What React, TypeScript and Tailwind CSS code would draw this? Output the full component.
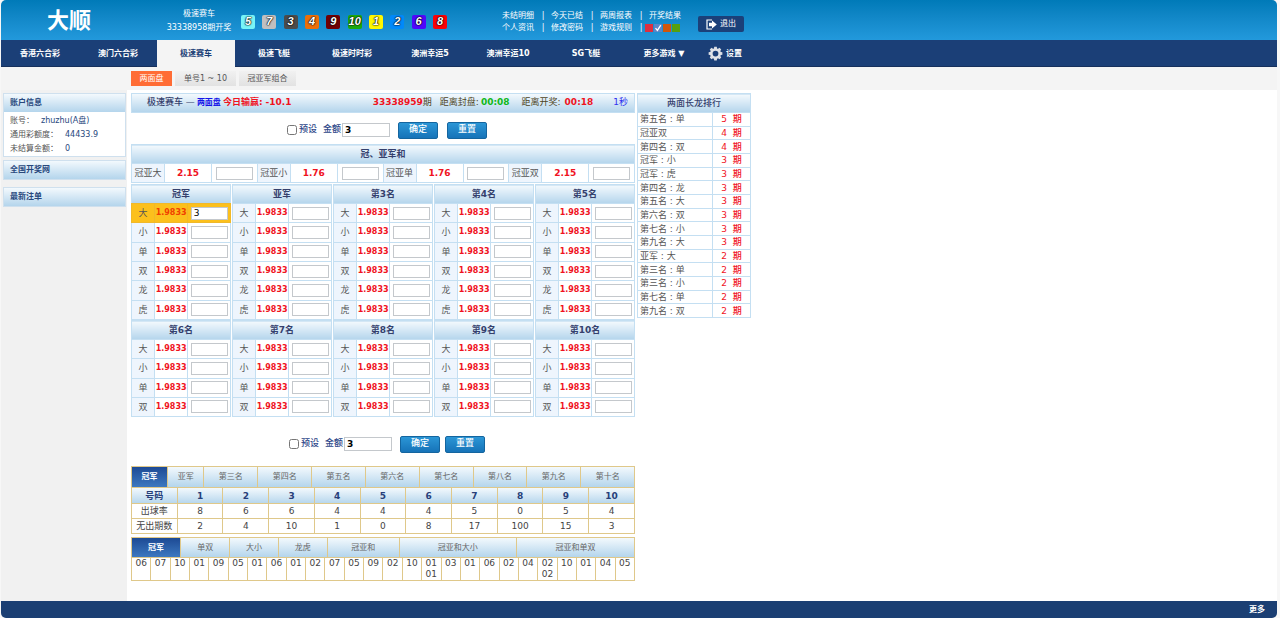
import React, { useState } from 'react';

const FONT = "font-['DejaVu_Sans','Noto_Sans_CJK_SC',sans-serif]";
const HEAD = 'bg-linear-to-b from-[#f3f9fd] to-[#b4d5ec]';

const balls = [
    { n: 5, color: 'bg-[#78f5f8]' },
    { n: 7, color: 'bg-[#c1bfbf]' },
    { n: 3, color: 'bg-[#4b4b4b]' },
    { n: 4, color: 'bg-[#ec6f0a]' },
    { n: 9, color: 'bg-[#700005]' },
    { n: 10, color: 'bg-[#1ba90d]' },
    { n: 1, color: 'bg-[#fff700]' },
    { n: 2, color: 'bg-[#0089fa]' },
    { n: 6, color: 'bg-[#4f08fb]' },
    { n: 8, color: 'bg-[#fb0207]' },
];

const menu = [
    ['未结明细', '今天已结', '两周报表', '开奖结果'],
    ['个人资讯', '修改密码', '游戏规则'],
];

const games = [
    '香港六合彩',
    '澳门六合彩',
    '极速赛车',
    '极速飞艇',
    '极速时时彩',
    '澳洲幸运5',
    '澳洲幸运10',
    'SG飞艇',
    '更多游戏 ▼',
];

const sums = [
    { name: '冠亚大', odds: '2.15' },
    { name: '冠亚小', odds: '1.76' },
    { name: '冠亚单', odds: '1.76' },
    { name: '冠亚双', odds: '2.15' },
];

const firstHalf = ['冠军', '亚军', '第3名', '第4名', '第5名'];
const secondHalf = ['第6名', '第7名', '第8名', '第9名', '第10名'];

const ranking: [string, number][] = [
    ['第五名 : 单', 5],
    ['冠亚双', 4],
    ['第四名 : 双', 4],
    ['冠军 : 小', 3],
    ['冠军 : 虎', 3],
    ['第四名 : 龙', 3],
    ['第五名 : 大', 3],
    ['第六名 : 双', 3],
    ['第七名 : 小', 3],
    ['第九名 : 大', 3],
    ['亚军 : 大', 2],
    ['第三名 : 单', 2],
    ['第三名 : 小', 2],
    ['第七名 : 单', 2],
    ['第九名 : 双', 2],
];

const positionTabs = ['冠军', '亚军', '第三名', '第四名', '第五名', '第六名', '第七名', '第八名', '第九名', '第十名'];

const stats = [
    { name: '出球率', values: [8, 6, 6, 4, 4, 4, 5, 0, 5, 4] },
    { name: '无出期数', values: [2, 4, 10, 1, 0, 8, 17, 100, 15, 3] },
];

const trendTabs = [
    { name: '冠军', width: 'grow-[49]' },
    { name: '单双', width: 'grow-[49]' },
    { name: '大小', width: 'grow-[48]' },
    { name: '龙虎', width: 'grow-[49]' },
    { name: '冠亚和', width: 'grow-[72]' },
    { name: '冠亚和大小', width: 'grow-[118]' },
    { name: '冠亚和单双', width: 'grow-[119]' },
];

const trend = [
    ['06'], ['07'], ['10'], ['01'], ['09'], ['05'], ['01'], ['06'], ['01'], ['02'], ['07'], ['05'], ['09'],
    ['02'], ['10'], ['01', '01'], ['03'], ['01'], ['06'], ['02'], ['04'], ['02', '02'], ['10'], ['01'], ['04'], ['05'],
];

const GearIcon = () => (
    <svg viewBox="0 0 24 24" className="size-[15px]" fill="none">
        {[0, 45, 90, 135, 180, 225, 270, 315].map((a) => (
            <path key={a} d="M9.2 5 10 1h4l.8 4z" fill="#d9dde3" transform={`rotate(${a} 12 12)`} />
        ))}
        <circle cx="12" cy="12" r="6.6" stroke="#dfe2e7" strokeWidth="4" />
    </svg>
);

const ExitIcon = () => (
    <svg viewBox="0 0 11 11" className="size-[11px]">
        <path d="M6 1H1v9h5" fill="none" stroke="#fff" strokeWidth="1.2" />
        <path d="M3 3.7h3V1.4l4.8 4.1L6 9.6V7.3H3z" fill="#fff" />
    </svg>
);

const Header = () => (
    <header className="flex h-10 items-center rounded-t-[5px] bg-linear-to-b from-[#007ab8] to-[#2299dc] pt-px text-[8px] text-white">
        <h1 className="w-[158px] pl-[46px] text-[22px] leading-none font-bold">大顺</h1>
        <div className="w-[80px] text-center leading-[14px]">
            <div>极速赛车</div>
            <div>33338958期开奖</div>
        </div>
        <ul className="ml-0.5 flex w-[206px] justify-between pt-0.5">
            {balls.map((b) => (
                <li
                    key={b.n}
                    className={`flex size-[14px] items-center justify-center rounded-[2px] font-['Liberation_Sans',sans-serif] text-[11px] font-bold italic text-white [text-shadow:0_0_1px_#000,0_0_1px_#000,0_0_2px_#000] ${b.color}`}
                >
                    {b.n}
                </li>
            ))}
        </ul>
        <div className="ml-[55px] pt-0.5 leading-3">
            {menu.map((row, i) => (
                <div key={i} className="flex items-center">
                    {row.map((item, j) => (
                        <React.Fragment key={item}>
                            {j > 0 && <span className="w-4 text-center">|</span>}
                            <a href="#" className="w-[33px]">
                                {item}
                            </a>
                        </React.Fragment>
                    ))}
                    {i === 1 && (
                        <>
                            <span className="w-4 text-center">|</span>
                            <span className="-ml-1 flex gap-px">
                                <button aria-label="红色" className="size-2 bg-[#dd2f40]" />
                                <button aria-label="蓝色" className="size-2 bg-[#5b86c8]">
                                    <svg viewBox="0 0 8 8" className="size-2">
                                        <path d="M1.5 4.2 3.4 6.4 6.8 1.2" fill="none" stroke="#fff" strokeWidth="1.3" />
                                    </svg>
                                </button>
                                <button aria-label="橙色" className="size-2 bg-[#d0560a]" />
                                <button aria-label="绿色" className="size-2 bg-[#55a010]" />
                            </span>
                        </>
                    )}
                </div>
            ))}
        </div>
        <button className="mt-[7px] ml-4 flex h-4 w-[46px] items-center justify-center gap-[3px] rounded-[2px] bg-[#1b4079]">
            <ExitIcon />
            退出
        </button>
    </header>
);

const GameNav = () => {
    const [active, setActive] = useState('极速赛车');

    return (
        <nav className="flex h-[27px] border-b border-[#16305c] bg-[#1b3f77] text-[8px] font-bold text-white">
            {games.map((g) => (
                <button
                    key={g}
                    onClick={() => setActive(g)}
                    className={`w-[78px] pt-px ${g === active ? '-mb-px bg-[#f4f4f4] text-[#1b3f77]' : ''}`}
                >
                    {g}
                </button>
            ))}
            <button className="ml-[5px] flex items-center gap-[3px] pt-px">
                <GearIcon />
                设置
            </button>
        </nav>
    );
};

const SubNav = () => (
    <div className="flex h-[23px] items-center gap-[3px] bg-[#f4f4f4] pl-[130px] text-[8px] text-[#555]">
        <button className="h-[15px] w-[41px] bg-[#ff6c35] text-white">两面盘</button>
        <button className="h-[15px] w-[61px] bg-linear-to-b from-[#f1f1f1] to-[#e2e2e2]">单号1 ~ 10</button>
        <button className="h-[15px] w-[57px] bg-linear-to-b from-[#f1f1f1] to-[#e2e2e2]">冠亚军组合</button>
    </div>
);

const Sidebar = () => (
    <aside className="w-[126px] shrink-0 bg-[#f1f1f1] pt-[3px] pr-px pl-0.5 text-[8px] text-[#555]">
        <section className="border border-[#cfe0ee] bg-white">
            <h2 className={`flex h-[18px] items-center pl-1.5 font-bold text-[#28487d] ${HEAD}`}>账户信息</h2>
            <dl className="flex flex-col pt-0.5 pl-1.5 leading-[14px] [&_dd]:text-[#28487d]">
                <div className="flex gap-[7px]">
                    <dt>账号：</dt>
                    <dd>zhuzhu(A盘)</dd>
                </div>
                <div className="flex gap-[7px]">
                    <dt>通用彩额度：</dt>
                    <dd>44433.9</dd>
                </div>
                <div className="flex gap-[7px]">
                    <dt>未结算金额：</dt>
                    <dd>0</dd>
                </div>
            </dl>
        </section>
        <h2 className={`mt-[3px] flex h-5 items-center border border-[#cfe0ee] pl-1.5 font-bold text-[#28487d] ${HEAD}`}>
            <a href="#">全国开奖网</a>
        </h2>
        <h2 className={`mt-[7px] flex h-5 items-center border border-[#cfe0ee] pl-1.5 font-bold text-[#28487d] ${HEAD}`}>
            最新注单
        </h2>
    </aside>
);

const BetInput = ({ label, value = '' }: { label: string; value?: string }) => (
    <input
        aria-label={label}
        defaultValue={value}
        className="mx-auto block h-[13px] w-[37px] border border-[#c4c8cc] bg-white px-0.5 text-[9px] text-black"
    />
);

const PresetBar = ({ id, className, gap }: { id: string; className: string; gap: string }) => (
    <div className={`flex items-center justify-center pl-2 text-[9px] font-medium text-[#2c4688] ${className}`}>
        <input id={`${id}-preset`} type="checkbox" className="size-[10px]" />
        <label htmlFor={`${id}-preset`} className="ml-0.5">
            预设
        </label>
        <label htmlFor={`${id}-amount`} className="ml-1.5">
            金额
        </label>
        <input
            id={`${id}-amount`}
            defaultValue="3"
            className="ml-px h-[14px] w-12 border border-[#c4c8cc] bg-white px-0.5 font-bold text-black"
        />
        <div className={`ml-2 flex text-white ${gap}`}>
            <button className="h-[17px] w-10 rounded-[2px] border border-[#14659f] bg-linear-to-b from-[#2b96d6] to-[#1673b8]">
                确定
            </button>
            <button className="h-[17px] w-10 rounded-[2px] border border-[#14659f] bg-linear-to-b from-[#2b96d6] to-[#1673b8]">
                重置
            </button>
        </div>
    </div>
);

const OddsTable = ({ title, rows, height }: { title: string; rows: string[]; height: string }) => (
    <table className={`w-full table-fixed border-collapse border border-[#c4dff2] text-center text-[9px] leading-3 ${height}`}>
        <colgroup>
            <col className="w-[23%]" />
            <col className="w-[34%]" />
            <col className="w-[43%]" />
        </colgroup>
        <thead>
            <tr>
                <th colSpan={3} className={`h-[19px] p-0 text-[#35406d] ${HEAD}`}>
                    {title}
                </th>
            </tr>
        </thead>
        <tbody>
            {rows.map((r) => {
                const picked = title === '冠军' && r === '大';
                return (
                    <tr key={r} className={picked ? 'bg-[#fcc01c]' : ''}>
                        <td className={`border p-0 text-[#555] ${picked ? 'border-[#f0b82a]' : 'border-[#c4dff2] bg-[#eef5fd]'}`}>
                            {r}
                        </td>
                        <td
                            className={`border p-0 text-[8px] font-bold ${picked ? 'border-[#f0b82a] text-[#f04000]' : 'border-[#c4dff2] text-[#f0131e]'}`}
                        >
                            1.9833
                        </td>
                        <td className={`border p-0 ${picked ? 'border-[#f0b82a]' : 'border-[#c4dff2]'}`}>
                            <BetInput label={`${title} ${r}`} value={picked ? '3' : ''} />
                        </td>
                    </tr>
                );
            })}
        </tbody>
    </table>
);

const Ranking = () => (
    <table className="h-[225px] w-[114px] shrink-0 border-collapse self-start border border-[#c4dff2] text-[9px] leading-3 text-[#555]">
        <thead>
            <tr>
                <th colSpan={2} className={`h-[19px] p-0 font-medium text-[#35406d] ${HEAD}`}>
                    两面长龙排行
                </th>
            </tr>
        </thead>
        <tbody>
            {ranking.map(([name, count]) => (
                <tr key={name}>
                    <td className="w-[75px] border border-[#c4dff2] p-0 pl-0.5">{name}</td>
                    <td className="border border-[#c4dff2] p-0 text-center font-medium text-[#f0131e]">
                        <span className="mr-1.5">{count}</span>期
                    </td>
                </tr>
            ))}
        </tbody>
    </table>
);

const tabStyle = (active: boolean) =>
    active ? 'bg-linear-to-b from-[#1d4a94] to-[#3d78c0] font-bold text-white' : `text-[#666] ${HEAD}`;

const Stats = () => {
    const [tab, setTab] = useState('冠军');

    return (
        <section className="text-[9px] text-[#444]">
            <div className="flex h-[21px] divide-x divide-[#dfc88a] border border-b-0 border-[#dfc88a] text-[8px]">
                {positionTabs.map((t) => (
                    <button
                        key={t}
                        onClick={() => setTab(t)}
                        className={`basis-0 ${t.length === 2 ? 'grow-2' : 'grow-3'} ${tabStyle(t === tab)}`}
                    >
                        {t}
                    </button>
                ))}
            </div>
            <table className="w-full table-fixed border-collapse text-center leading-3">
                <thead>
                    <tr className={`h-4 text-[#28407a] ${HEAD}`}>
                        <th className="border border-[#dfc88a] p-0">号码</th>
                        {[1, 2, 3, 4, 5, 6, 7, 8, 9, 10].map((n) => (
                            <th key={n} className="border border-[#dfc88a] p-0">
                                {n}
                            </th>
                        ))}
                    </tr>
                </thead>
                <tbody>
                    {stats.map((s) => (
                        <tr key={s.name} className="h-[15px]">
                            <td className="border border-[#dfc88a] p-0">{s.name}</td>
                            {s.values.map((v, i) => (
                                <td key={i} className="border border-[#dfc88a] p-0">
                                    {v}
                                </td>
                            ))}
                        </tr>
                    ))}
                </tbody>
            </table>
        </section>
    );
};

const Trend = () => {
    const [tab, setTab] = useState('冠军');

    return (
        <section className="mt-[3px] text-[9px] text-[#444]">
            <div className="flex h-5 divide-x divide-[#dfc88a] border border-b-0 border-[#dfc88a] text-[8px]">
                {trendTabs.map((t) => (
                    <button
                        key={t.name}
                        onClick={() => setTab(t.name)}
                        className={`basis-0 ${t.width} ${tabStyle(t.name === tab)}`}
                    >
                        {t.name}
                    </button>
                ))}
            </div>
            <table className="w-full table-fixed border-collapse text-center leading-[11px]">
                <tbody>
                    <tr>
                        {trend.map((nums, i) => (
                            <td key={i} className="border border-[#dfc88a] p-0 align-top">
                                {nums.map((n, j) => (
                                    <div key={j}>{n}</div>
                                ))}
                            </td>
                        ))}
                    </tr>
                </tbody>
            </table>
        </section>
    );
};

export default function App() {
    return (
        <div className={`flex min-h-screen flex-col bg-[#f7f7f7] pr-[3px] pl-px ${FONT}`}>
            <Header />
            <GameNav />
            <SubNav />
            <div className="flex flex-1 bg-white">
                <Sidebar />
                <main className="flex flex-1 gap-0.5 pt-[3px] pl-1">
                    <div className="w-full max-w-[504px]">
                        <div className={`flex h-5 items-center border border-[#c4dff2] pr-1.5 pl-[15px] text-[9px] whitespace-nowrap ${HEAD}`}>
                            <span className="font-medium text-[#35406d]">极速赛车 —</span>
                            <span className="ml-0.5 text-[8px] font-bold text-[#1414e8]">两面盘</span>
                            <span className="ml-0.5 font-bold text-[#f0131e]">今日输赢: -10.1</span>
                            <div className="ml-auto flex text-[#4f451d]">
                                <span>
                                    <b className="text-[#f0131e]">33338959</b>期
                                </span>
                                <span className="ml-2">距离封盘:</span>
                                <b className="ml-0.5 text-[#10b818]">00:08</b>
                                <span className="ml-3">距离开奖:</span>
                                <b className="ml-1 text-[#f0131e]">00:18</b>
                                <span className="ml-5 text-[#3232f0]">1秒</span>
                            </div>
                        </div>
                        <PresetBar id="top" className="h-[31px] pt-[3px]" gap="gap-[9px]" />
                        <table className="h-[39px] w-full table-fixed border-collapse border border-[#c4dff2] text-center text-[9px] leading-3">
                            <colgroup>
                                {sums.map((s) => (
                                    <React.Fragment key={s.name}>
                                        <col className="w-[33px]" />
                                        <col className="w-[47px]" />
                                        <col />
                                    </React.Fragment>
                                ))}
                            </colgroup>
                            <thead>
                                <tr>
                                    <th colSpan={12} className={`h-[19px] p-0 text-[#35406d] ${HEAD}`}>
                                        冠、亚军和
                                    </th>
                                </tr>
                            </thead>
                            <tbody>
                                <tr>
                                    {sums.map((s) => (
                                        <React.Fragment key={s.name}>
                                            <td className="border border-[#c4dff2] bg-[#eef5fd] p-0 text-[#555]">{s.name}</td>
                                            <td className="border border-[#c4dff2] p-0 font-bold text-[#f0131e]">{s.odds}</td>
                                            <td className="border border-[#c4dff2] p-0">
                                                <BetInput label={s.name} />
                                            </td>
                                        </React.Fragment>
                                    ))}
                                </tr>
                            </tbody>
                        </table>
                        <div className="mt-px grid grid-cols-5 gap-x-px">
                            {firstHalf.map((t) => (
                                <OddsTable key={t} title={t} rows={['大', '小', '单', '双', '龙', '虎']} height="h-[136px]" />
                            ))}
                            {secondHalf.map((t) => (
                                <OddsTable key={t} title={t} rows={['大', '小', '单', '双']} height="h-[97px]" />
                            ))}
                        </div>
                        <PresetBar id="bottom" className="h-[49px] pt-[5px]" gap="gap-[5px]" />
                        <Stats />
                        <Trend />
                    </div>
                    <Ranking />
                </main>
            </div>
            <footer className="flex h-[17px] items-center justify-end rounded-b-[5px] bg-[#1b3f73] pr-3 text-[8px] font-bold text-white">
                <a href="#">更多</a>
            </footer>
        </div>
    );
}
